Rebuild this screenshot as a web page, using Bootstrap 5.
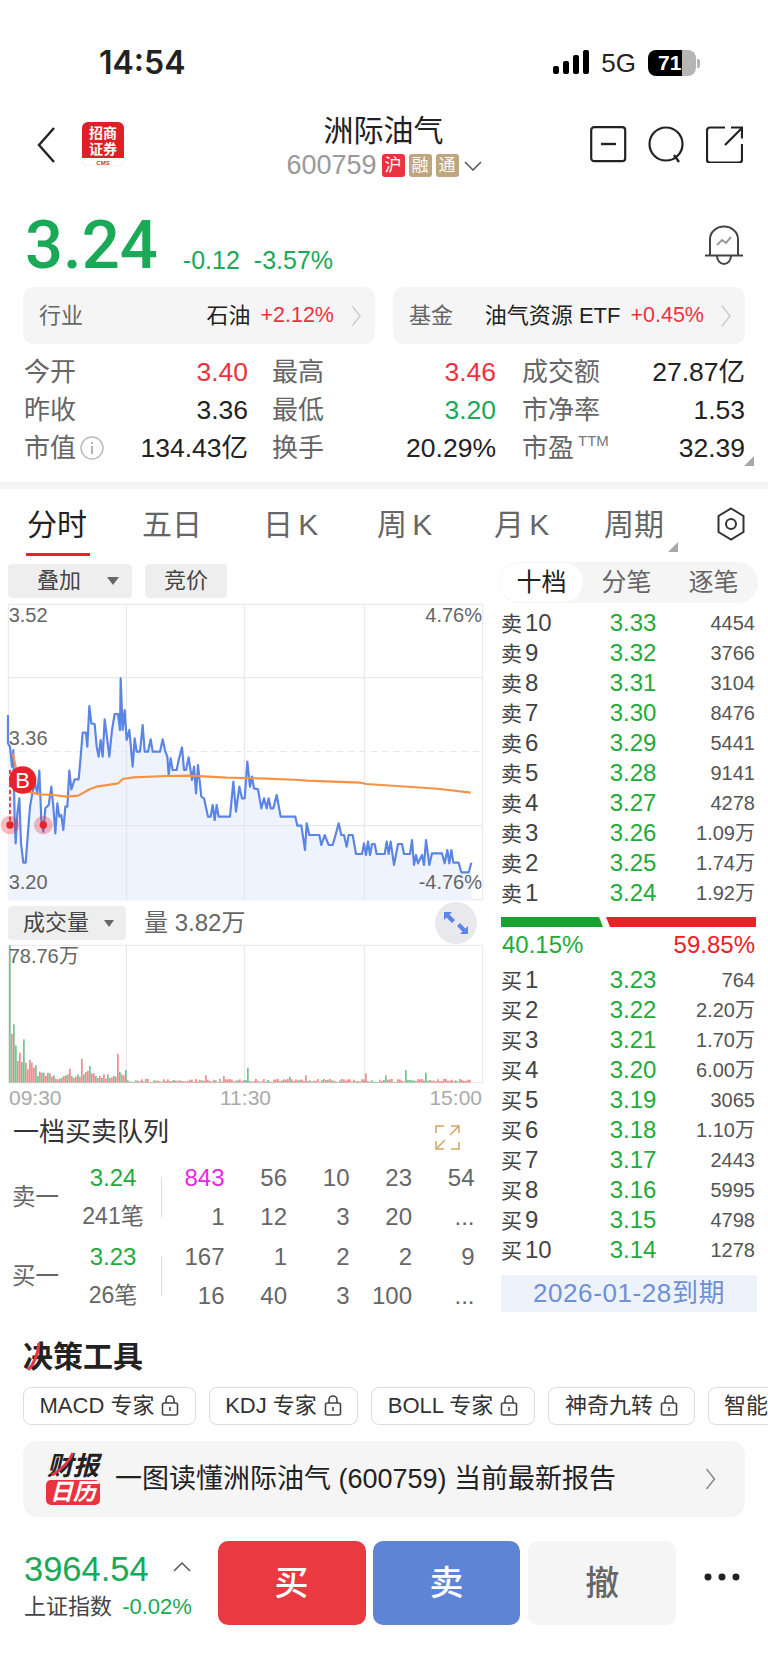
<!DOCTYPE html>
<html lang="zh-CN">
<head>
    <meta charset="UTF-8">
    <meta name="viewport" content="width=device-width, initial-scale=1.0">
    <title>洲际油气 600759</title>
    <link href="https://cdn.jsdelivr.net/npm/bootstrap@5.3.0/dist/css/bootstrap.min.css" rel="stylesheet">
    <style>
        body {
            width: 768px;
            height: 1670px;
            overflow: hidden;
            background: #fff;
            color: #222;
            font-family: "Liberation Sans", "Noto Sans CJK SC", sans-serif;
        }
        .clr-up { color: #ea3340; }
        .clr-down { color: #1aa957; }
        .clr-grey { color: #666; }

        .status-bar { height: 112px; padding: 46px 68px 0 99px; }
        .status-time { font-family: Inter, "Liberation Sans", sans-serif; font-weight: 600; font-size: 32px; line-height: 34px; }
        .status-net { font-size: 26px; line-height: 34px; margin: 0 12px 0 12px; }
        .battery-body { width: 48px; height: 26px; border-radius: 8px; background: linear-gradient(90deg, #000 71%, #b5b5b5 71%); color: #fff; font-weight: 700; font-size: 21px; line-height: 26px; padding-left: 10px; }
        .battery-cap { width: 3px; height: 9px; background: #b5b5b5; border-radius: 0 2px 2px 0; margin-left: 1px; margin-top: 13px; }

        .head-bar { height: 66px; padding: 0 25px 0 37px; position: relative; }
        .head-logo { width: 42px; height: 44px; margin-left: 27px; margin-top: 10px; }
        .head-center { position: absolute; left: 0; right: 0; top: 0; text-align: center; }
        .head-title { font-size: 30px; line-height: 36px; color: #222; margin-top: 1px; padding-right: 1px; }
        .head-code { font-size: 27px; line-height: 27px; color: #999; margin-top: 3px; }
        .head-tag { width: 23px; height: 23px; border-radius: 3px; background: #bfa67f; color: #fff; font-size: 17px; line-height: 23px; text-align: center; margin-left: 4px; }
        .head-tag.tag-red { background: #ea3340; margin-left: 5px; }
        .head-icons { gap: 21px; margin-top: 14px; }

        .price-row { height: 109px; padding: 34px 25px 0 25px; }
        .price-big { font-family: Roboto, "Liberation Sans", sans-serif; font-weight: 500; font-size: 67px; line-height: 66px; }
        .price-diff { font-size: 25px; line-height: 30px; margin: 33px 0 0 25px; }
        .price-diff span + span { margin-left: 14px; }

        .sector-row { padding: 0 23px; gap: 18px; }
        .sector-box { width: 352px; height: 57px; border-radius: 10px; background: #f5f5f5; padding: 0 14px 0 16px; font-size: 22px; }
        .sector-pct { font-size: 21.500px; margin-left: 10px; color: #ea3340; }
        .sector-label { color: #666; font-size: 22px; }
        .stat-grid { padding: 9px 23px 0 24px; height: 138px; font-size: 26.500px; }
        .stat-line { height: 38px; line-height: 38px; }
        .stat-cell { width: 224px; }
        .stat-cell + .stat-cell { margin-left: 24px; }
        .stat-cell:last-child { width: 223px; margin-left: 26px; }
        .stat-name { color: #666; font-size: 26px; }
        .ttm-mark { font-size: 15px; position: relative; top: -11px; margin-left: 4px; color: #777; }
        .corner-tri { position: absolute; width: 0; height: 0; border-left: 10px solid transparent; border-bottom: 10px solid #a9a9a9; }
        .gap-band { height: 7px; background: #f5f5f5; }

        .tab-strip { height: 69px; position: relative; font-size: 30px; color: #666; }
        .tab-item { position: absolute; top: 18px; line-height: 36px; word-spacing: -3px; }
        .tab-item.on { color: #222; }
        .tab-line { position: absolute; left: 26px; top: 64px; width: 64px; height: 3px; background: #e8212a; }

        .chart-main { padding-left: 8px; height: 772px; }
        .chart-left { width: 475px; }
        .chart-right { width: 259px; margin-left: 16px; }
        .tool-row { gap: 13px; margin-top: 6px; }
        .tool-btn { height: 34px; border-radius: 4px; background: #eee; font-size: 22px; line-height: 34px; color: #444; }
        .chart-svg { display: block; overflow: visible; }
        .vol-row { margin-top: 6px; height: 34px; }
        .vol-val { font-size: 24px; color: #666; margin-left: 18px; }
        .expand-round { width: 42px; height: 42px; border-radius: 50%; background: #e9e9ed; margin: 0 6px 0 auto; }
        .time-axis { height: 26px; font-size: 21px; line-height: 26px; color: #aaa; padding: 2px 1px 0; }

        .queue-head { height: 49px; padding: 8px 23px 0 5px; font-size: 26px; line-height: 30px; color: #333; }
        .queue-block { height: 79px; }
        .queue-side { width: 62px; padding-left: 4px; font-size: 23.500px; color: #666; }
        .queue-price { width: 86px; text-align: center; font-size: 23px; line-height: 39px; color: #666; }
        .queue-price b { display: block; font-weight: 400; font-size: 24px; color: #22aa3a; }
        .queue-rule { width: 1px; height: 40px; background: #ddd; margin: 19px 0 0 5px; }
        .queue-nums { flex: 1 1 auto; }
        .queue-line { height: 39px; }
        .queue-num { width: 62.500px; text-align: right; font-size: 24px; line-height: 39px; color: #666; }
        .queue-num.pink { color: #e629e0; }

        .seg-wrap { height: 41px; border-radius: 21px; background: #f5f5f5; padding: 1px; font-size: 25px; color: #666; margin-top: 4px; }
        .seg-item { flex: 1 1 0; text-align: center; line-height: 39px; border-radius: 20px; }
        .seg-item.on { background: #fff; color: #222; flex: 0 0 83px; }
        .book-list { padding: 0 3px 0 2px; }
        .book-line { height: 30px; line-height: 30px; }
        .book-name { width: 94px; font-size: 21px; color: #444; }
        .book-name span { font-size: 24px; margin-left: 3px; }
        .book-price { width: 76px; text-align: center; font-size: 24px; color: #22aa3a; }
        .book-size { flex: 1 1 auto; text-align: right; font-size: 20px; color: #555; }
        .ratio-bar { height: 10px; margin: 9px 2px 0 2px; gap: 3px; }
        .ratio-green { width: 102px; background: #18a22f; clip-path: polygon(0 0, 98px 0, 100% 100%, 0 100%); }
        .ratio-red { width: 150px; background: #ea2227; clip-path: polygon(0 0, 100% 0, 100% 100%, 4px 100%); }
        .ratio-text { height: 38px; padding: 3px 3px 0 3px; font-size: 24px; line-height: 30px; }
        .expire-box { height: 37px; margin: 10px 1px 0 2px; background: #edf2fb; color: #6f8fd6; font-size: 26px; letter-spacing: .6px; line-height: 37px; text-align: center; }

        .tools-title { padding: 0 23px; margin-top: 9px; height: 37px; font-size: 30px; line-height: 36px; font-weight: 700; color: #222; position: relative; }
        .title-slash { position: absolute; left: 27px; top: 3px; }
        .chip-row { padding-left: 23px; gap: 13px; margin-top: 11px; overflow: hidden; }
        .chip-item { flex: 0 0 auto; height: 38px; border: 1px solid #ddd; border-radius: 8px; font-size: 22px; line-height: 36px; color: #333; white-space: nowrap; text-align: center; }
        .chip-item svg { margin-left: 7px; vertical-align: -3px; }
        .chip-macd { width: 173px; }
        .chip-kdj { width: 149px; }
        .chip-boll { width: 164px; }
        .chip-nine { width: 147px; }
        .chip-more { width: 120px; text-align: left; padding-left: 15px; }
        .report-box { height: 76px; margin: 16px 23px 0; background: #f5f5f5; border-radius: 14px; padding: 0 29px 0 23px; }
        .report-logo { width: 54px; text-align: center; font-weight: 700; font-style: italic; line-height: 1; position: relative; }
        .report-top { font-size: 26px; color: #222; height: 27px; line-height: 27px; }
        .report-low { font-size: 23px; color: #fff; background: #ea3340; border-radius: 5px; height: 25px; line-height: 25px; }
        .report-slash { position: absolute; left: 5px; top: -1px; }
        .report-text { font-size: 27px; color: #222; margin-left: 15px; }

        .order-bar { margin-top: 24px; padding: 0 28px 0 24px; height: 84px; }
        .index-box { width: 194px; position: relative; }
        .index-num { font-size: 34.500px; line-height: 40px; margin-top: 8px; }
        .index-name { font-size: 22px; line-height: 30px; color: #444; margin-top: 3px; }
        .order-btn { width: 148px; height: 84px; border-radius: 10px; border: 0; font-size: 34px; font-weight: 500; padding: 0; }
        .btn-buy { background: #ea3940; color: #fff; }
        .btn-sell { background: #5e85d5; color: #fff; margin-left: 7px; }
        .btn-undo { background: #f5f5f5; color: #666; margin-left: 8px; }
        .more-dots { margin-left: 28px; margin-top: 31px; }
    </style>
</head>
<body>
    <svg width="0" height="0" class="position-absolute">
        <symbol id="lockIcon" viewBox="0 0 18 22"><path d="M5 9V6a4 4 0 0 1 8 0v3" fill="none" stroke="#444" stroke-width="1.600"/><rect x="1.500" y="9" width="15" height="12" rx="2" fill="none" stroke="#444" stroke-width="1.600"/><path d="M9 13v4" stroke="#444" stroke-width="1.600"/></symbol>
        <symbol id="thinArrow" viewBox="0 0 10 22"><path d="M1 1l8 10-8 10" fill="none" stroke="#ccc" stroke-width="1.500"/></symbol>
    </svg>

    <div class="status-bar d-flex justify-content-between">
        <div class="status-time">14:54</div>
        <div class="d-flex align-items-start">
            <svg width="36" height="24" viewBox="0 0 36 24" class="mt-1"><rect x="0" y="16" width="6" height="8" rx="2" fill="#000"/><rect x="10" y="11" width="6" height="13" rx="2" fill="#000"/><rect x="20" y="5" width="6" height="19" rx="2" fill="#000"/><rect x="30" y="0" width="6" height="24" rx="2" fill="#000"/></svg>
            <span class="status-net">5G</span>
            <div class="battery-body mt-1">71</div>
            <div class="battery-cap"></div>
        </div>
    </div>

    <div class="head-bar d-flex justify-content-between align-items-start">
        <div class="head-center">
            <div class="head-title">洲际油气</div>
            <div class="head-code d-flex justify-content-center align-items-center">
                <span>600759</span>
                <span class="head-tag tag-red">沪</span><span class="head-tag">融</span><span class="head-tag">通</span>
                <svg width="18" height="10" viewBox="0 0 18 10" style="margin-left:5px"><path d="M1 1l8 8 8-8" fill="none" stroke="#555" stroke-width="1.500"/></svg>
            </div>
        </div>
        <div class="d-flex position-relative">
            <svg width="18" height="36" viewBox="0 0 18 36" style="margin-top:15px"><path d="M17 1L2 18l15 17" fill="none" stroke="#222" stroke-width="2.400"/></svg>
            <svg class="head-logo" viewBox="0 0 42 44">
                <rect width="42" height="44" rx="6" fill="#fff" stroke="#eee"/>
                <path d="M0 6a6 6 0 0 1 6-6h30a6 6 0 0 1 6 6v30H0z" fill="#de1f26"/>
                <text x="21" y="16" text-anchor="middle" font-size="14" font-weight="700" fill="#fff" font-family="'Noto Sans CJK SC'">招商</text>
                <text x="21" y="32" text-anchor="middle" font-size="14" font-weight="700" fill="#fff" font-family="'Noto Sans CJK SC'">证券</text>
                <text x="21" y="42.500" text-anchor="middle" font-size="6" font-weight="700" fill="#c33">CMS</text>
            </svg>
        </div>
        <div class="head-icons d-flex position-relative">
            <svg width="37" height="37" viewBox="0 0 37 37"><rect x="1.200" y="1.200" width="34" height="34" rx="3" fill="none" stroke="#222" stroke-width="2.200"/><path d="M11 18h15" stroke="#222" stroke-width="2.400"/></svg>
            <svg width="37" height="37" viewBox="0 0 37 37"><circle cx="18" cy="18" r="16.500" fill="none" stroke="#222" stroke-width="2.200"/><path d="M26 29l5 7" stroke="#222" stroke-width="2.400"/></svg>
            <svg width="37" height="37" viewBox="0 0 37 37"><path d="M19 1.500H4a3 3 0 0 0-3 3v29a3 3 0 0 0 3 3h29a3 3 0 0 0 3-3V18" fill="none" stroke="#222" stroke-width="2.200"/><path d="M19 19L36 2M25 1.500h11v11" fill="none" stroke="#222" stroke-width="2.200"/></svg>
        </div>
    </div>

    <div class="price-row d-flex clr-down position-relative">
        <div class="price-big">3.24</div>
        <div class="price-diff"><span>-0.12</span><span>-3.57%</span></div>
        <svg class="ms-auto" width="38" height="42" viewBox="0 0 38 42" style="margin-top:13px"><path d="M5 30V14a14 12.500 0 0 1 28 0v16" fill="none" stroke="#444" stroke-width="2"/><path d="M0 30.500h38" stroke="#444" stroke-width="2"/><path d="M12 31a7 8 0 0 0 14 0" fill="none" stroke="#444" stroke-width="2"/><path d="M12 20l5-5 4 3 5-6" fill="none" stroke="#999" stroke-width="2"/></svg>
    </div>

    <div class="sector-row d-flex">
        <div class="sector-box d-flex align-items-center">
            <span class="sector-label">行业</span>
            <span class="ms-auto">石油</span>
            <span class="sector-pct">+2.12%</span>
            <svg width="10" height="22" style="margin-left:17px"><use href="#thinArrow"/></svg>
        </div>
        <div class="sector-box d-flex align-items-center">
            <span class="sector-label">基金</span>
            <span class="ms-auto">油气资源 ETF</span>
            <span class="sector-pct">+0.45%</span>
            <svg width="10" height="22" style="margin-left:17px"><use href="#thinArrow"/></svg>
        </div>
    </div>

    <div class="stat-grid position-relative">
        <div class="stat-line d-flex">
            <div class="stat-cell d-flex justify-content-between"><span class="stat-name">今开</span><span class="clr-up">3.40</span></div>
            <div class="stat-cell d-flex justify-content-between"><span class="stat-name">最高</span><span class="clr-up">3.46</span></div>
            <div class="stat-cell d-flex justify-content-between"><span class="stat-name">成交额</span><span>27.87亿</span></div>
        </div>
        <div class="stat-line d-flex">
            <div class="stat-cell d-flex justify-content-between"><span class="stat-name">昨收</span><span>3.36</span></div>
            <div class="stat-cell d-flex justify-content-between"><span class="stat-name">最低</span><span class="clr-down">3.20</span></div>
            <div class="stat-cell d-flex justify-content-between"><span class="stat-name">市净率</span><span>1.53</span></div>
        </div>
        <div class="stat-line d-flex">
            <div class="stat-cell d-flex justify-content-between align-items-center"><span class="stat-name d-flex align-items-center">市值<svg class="ms-1" width="24" height="24" viewBox="0 0 24 24"><circle cx="12" cy="12" r="11" fill="none" stroke="#bbb" stroke-width="1.500"/><path d="M12 10v8M12 6v2" stroke="#aaa" stroke-width="1.800"/></svg></span><span>134.43亿</span></div>
            <div class="stat-cell d-flex justify-content-between"><span class="stat-name">换手</span><span>20.29%</span></div>
            <div class="stat-cell d-flex justify-content-between"><span class="stat-name">市盈<span class="ttm-mark">TTM</span></span><span>32.39</span></div>
        </div>
        <div class="corner-tri" style="left:744px;top:112px"></div>
    </div>
    <div class="gap-band"></div>

    <div class="tab-strip">
        <span class="tab-item on" style="left:27px">分时</span>
        <span class="tab-item" style="left:142px">五日</span>
        <span class="tab-item" style="left:263px">日 K</span>
        <span class="tab-item" style="left:377px">周 K</span>
        <span class="tab-item" style="left:494px">月 K</span>
        <span class="tab-item" style="left:604px">周期</span>
        <div class="corner-tri" style="left:668px;top:53px"></div>
        <svg class="position-absolute" style="left:717px;top:18px" width="28" height="34" viewBox="0 0 28 34"><path d="M14 1.500l12.500 7.500v16L14 32.500 1.500 25V9z" fill="none" stroke="#333" stroke-width="2"/><circle cx="14" cy="17" r="5" fill="none" stroke="#333" stroke-width="2"/></svg>
        <div class="tab-line"></div>
    </div>

    <div class="chart-main d-flex">
        <div class="chart-left">
            <div class="tool-row d-flex">
                <div class="tool-btn d-flex align-items-center" style="width:124px;padding-left:29px">叠加<svg style="margin-left:26px" width="12" height="8" viewBox="0 0 12 8"><path d="M0 0h12L6 8z" fill="#666"/></svg></div>
                <div class="tool-btn text-center" style="width:82px">竞价</div>
            </div>
            <svg id="priceChart" class="chart-svg" style="margin-top:6px" width="475" height="296" viewBox="24 132 1425 888" font-family="Liberation Sans" font-size="60" fill="#666">
                <rect x="25" y="133" width="1423" height="886" fill="#fff" stroke="#e8e8e8" stroke-width="3"/>
                <path id="priceArea" fill="#eff3fe"/>
                <g stroke="#e4e4e8" stroke-width="3">
                    <path d="M379 132v888M733 132v888M1093 132v888M24 353h1425M24 797h1425"/>
                    <path d="M24 575h1425" stroke-dasharray="20 14"/>
                </g>
                <text x="26" y="186">3.52</text>
                <text x="26" y="554">3.36</text>
                <text x="26" y="988">3.20</text>
                <text x="1446" y="186" text-anchor="end">4.76%</text>
                <text x="1446" y="988" text-anchor="end">-4.76%</text>
                <polyline id="priceLine" fill="none" stroke="#5a85e4" stroke-width="6.500" stroke-linejoin="round"/>
                <polyline fill="none" stroke="#f59243" stroke-width="6.500" stroke-linejoin="round" points="38,580 48,625 60,660 80,695 120,703 160,705 200,710 235,707 270,687 290,680 355,670 368,657 400,652 500,648 570,647 680,653 780,655 900,660 920,662 1080,668 1100,672 1280,684 1320,687 1412,698"/>
                <path d="M30 630v165" stroke="#e8212a" stroke-width="5" stroke-dasharray="12 8"/>
                <circle cx="30" cy="795" r="28" fill="#e8212a" opacity=".3"/><circle cx="30" cy="795" r="11" fill="#e8212a"/>
                <circle cx="130" cy="795" r="28" fill="#e8212a" opacity=".3"/><circle cx="130" cy="795" r="11" fill="#e8212a"/>
                <circle cx="68" cy="660" r="41" fill="#e8212a"/>
                <text x="68" y="684" text-anchor="middle" fill="#fff" font-size="66">B</text>
            </svg>
            <div class="vol-row d-flex align-items-center">
                <div class="tool-btn d-flex align-items-center" style="width:118px;padding-left:15px">成交量<svg style="margin-left:15px" width="10" height="7" viewBox="0 0 10 7"><path d="M0 0h10L5 7z" fill="#666"/></svg></div>
                <span class="vol-val">量 3.82万</span>
                <div class="expand-round d-flex align-items-center justify-content-center"><svg width="26" height="24" viewBox="0 0 26 24"><path d="M1 1h8L6.500 3.500 12 9l-3 3-5.500-5.500L1 9zM25 23h-8l2.500-2.500L14 15l3-3 5.500 5.500L25 15z" fill="#5a85e4"/></svg></div>
            </div>
            <svg id="volChart" class="chart-svg" style="margin-top:5px" width="475" height="138" viewBox="24 137 1425 414" font-family="Liberation Sans" font-size="60" fill="#666">
                <rect x="25" y="138" width="1423" height="412" fill="#fff" stroke="#e8e8e8" stroke-width="3"/>
                <path d="M379 137v413M733 137v413M1093 137v413" stroke="#e4e4e8" stroke-width="3"/>
                <g id="volBars"></g>
                <text x="26" y="192">78.76万</text>
            </svg>
            <div class="time-axis d-flex justify-content-between"><span>09:30</span><span>11:30</span><span>15:00</span></div>

            <div class="queue-head d-flex justify-content-between">
                <span>一档买卖队列</span>
                <svg width="25" height="25" viewBox="0 0 25 25" style="margin-top:8px"><path d="M1 8V1h8M16 1h8v7M24 17v7h-8M9 24H1v-8M15 10l8-8M10 15l-8 8" fill="none" stroke="#d4a562" stroke-width="1.500"/></svg>
            </div>
            <div class="queue-block d-flex">
                <div class="queue-side d-flex align-items-center">卖一</div>
                <div class="queue-price"><b>3.24</b>241笔</div>
                <div class="queue-rule"></div>
                <div class="queue-nums">
                    <div class="queue-line d-flex"><span class="queue-num pink">843</span><span class="queue-num">56</span><span class="queue-num">10</span><span class="queue-num">23</span><span class="queue-num">54</span></div>
                    <div class="queue-line d-flex"><span class="queue-num">1</span><span class="queue-num">12</span><span class="queue-num">3</span><span class="queue-num">20</span><span class="queue-num">...</span></div>
                </div>
            </div>
            <div class="queue-block d-flex">
                <div class="queue-side d-flex align-items-center">买一</div>
                <div class="queue-price"><b>3.23</b>26笔</div>
                <div class="queue-rule"></div>
                <div class="queue-nums">
                    <div class="queue-line d-flex"><span class="queue-num">167</span><span class="queue-num">1</span><span class="queue-num">2</span><span class="queue-num">2</span><span class="queue-num">9</span></div>
                    <div class="queue-line d-flex"><span class="queue-num">16</span><span class="queue-num">40</span><span class="queue-num">3</span><span class="queue-num">100</span><span class="queue-num">...</span></div>
                </div>
            </div>
        </div>

        <div class="chart-right">
            <div class="seg-wrap d-flex">
                <div class="seg-item on">十档</div>
                <div class="seg-item">分笔</div>
                <div class="seg-item">逐笔</div>
            </div>
            <div id="askList" class="book-list" style="padding-top:5px"></div>
            <div class="ratio-bar d-flex"><div class="ratio-green"></div><div class="ratio-red"></div></div>
            <div class="ratio-text d-flex justify-content-between"><span style="color:#22aa3a">40.15%</span><span style="color:#ea2227">59.85%</span></div>
            <div id="bidList" class="book-list"></div>
            <div class="expire-box">2026-01-28到期</div>
        </div>
    </div>

    <div class="tools-title">决策工具
        <svg class="title-slash" width="14" height="30" viewBox="0 0 14 30"><path d="M12 1C11 12 7 22 1 28" fill="none" stroke="#ea3340" stroke-width="3"/></svg>
    </div>
    <div class="chip-row d-flex">
        <div class="chip-item chip-macd">MACD 专家<svg width="18" height="22"><use href="#lockIcon"/></svg></div>
        <div class="chip-item chip-kdj">KDJ 专家<svg width="18" height="22"><use href="#lockIcon"/></svg></div>
        <div class="chip-item chip-boll">BOLL 专家<svg width="18" height="22"><use href="#lockIcon"/></svg></div>
        <div class="chip-item chip-nine">神奇九转<svg width="18" height="22"><use href="#lockIcon"/></svg></div>
        <div class="chip-item chip-more">智能</div>
    </div>
    <div class="report-box d-flex align-items-center">
        <div class="report-logo">
            <div class="report-top">财报</div>
            <div class="report-low">日历</div>
            <svg class="report-slash" width="24" height="24" viewBox="0 0 24 24"><path d="M1 23C10 18 18 10 22 1" fill="none" stroke="#ea3340" stroke-width="3"/></svg>
        </div>
        <span class="report-text">一图读懂洲际油气 (600759) 当前最新报告</span>
        <svg class="ms-auto" width="11" height="22" viewBox="0 0 10 22"><path d="M1 1l8 10-8 10" fill="none" stroke="#888" stroke-width="1.500"/></svg>
    </div>

    <div class="order-bar d-flex">
        <div class="index-box">
            <div class="index-num clr-down">3964.54</div>
            <div class="index-name">上证指数 <span class="clr-down ms-1">-0.02%</span></div>
            <svg class="position-absolute" style="left:149px;top:21px" width="18" height="10" viewBox="0 0 18 10"><path d="M1 9l8-8 8 8" fill="none" stroke="#555" stroke-width="1.500"/></svg>
        </div>
        <button class="order-btn btn-buy">买</button>
        <button class="order-btn btn-sell">卖</button>
        <button class="order-btn btn-undo">撤</button>
        <svg class="more-dots" width="36" height="10" viewBox="0 0 36 10"><circle cx="4" cy="5" r="3.500" fill="#222"/><circle cx="18" cy="5" r="3.500" fill="#222"/><circle cx="32" cy="5" r="3.500" fill="#222"/></svg>
    </div>

    <script>
        // blue minute line, in the 3x coordinates the svg viewBox uses
        var pts = "24,465 24,550 30,560 36,620 40,570 44,780 47,850 52,760 58,715 63,850 70,908 77,908 83,830 90,740 97,700 105,670 112,700 118,632 124,780 130,815 136,745 146,735 154,680 160,740 166,820 172,730 178,770 184,765 190,810 196,740 202,740 208,632 214,688 224,658 236,658 242,590 248,518 258,518 262,560 268,438 274,490 284,492 290,560 296,590 302,540 308,590 314,478 322,540 328,590 336,510 344,462 354,462 360,510 362,355 368,510 374,450 380,540 388,510 398,620 404,535 410,575 420,575 428,495 434,575 444,575 452,538 458,575 480,575 488,538 496,575 502,590 506,645 512,595 518,630 530,630 536,600 546,562 552,630 558,630 566,592 576,660 582,620 588,700 594,615 604,710 612,715 624,770 632,770 638,735 644,780 650,735 656,770 690,770 700,665 708,755 718,680 726,715 734,715 742,605 750,680 756,650 762,685 774,688 784,745 792,715 800,745 806,715 812,745 820,745 830,705 842,770 886,770 892,797 904,797 915,870 920,790 928,825 958,825 964,855 974,825 986,855 998,855 1008,820 1016,790 1024,825 1032,825 1040,860 1046,825 1058,825 1068,882 1086,882 1092,850 1098,885 1104,845 1110,885 1116,852 1124,852 1130,882 1154,882 1160,845 1166,882 1172,845 1182,915 1194,852 1206,852 1212,882 1230,882 1236,840 1242,915 1248,885 1254,910 1266,885 1272,915 1278,840 1288,915 1296,880 1326,880 1334,910 1342,870 1348,910 1354,870 1360,908 1376,908 1384,937 1406,937 1414,908";
        document.getElementById('priceLine').setAttribute('points', pts);
        document.getElementById('priceArea').setAttribute('d', 'M' + pts.replace(/ /g, 'L') + 'L1414,1019L24,1019Z');

        // volume bars: first stretch read off the picture, the tail is just low noise plus the visible spikes
        var head = [412,147,175,112,65,90,62,130,60,40,68,60,45,52,20,33,30,30,20,30,28,18,22,12,10,12,15,20,22,25,42,20,14,18,25,18,72,25,32,35,50,28,28,20,14,20,14,25,12,25,14,16,20,18,87,32,25,22,38];
        var spikes = {742: 45, 1003: 26, 1217: 38, 1277: 30, 1097: 28, 1157: 22, 672: 20, 617: 22, 916: 22, 866: 18, 943: 18};
        var seed = 7, html = '';
        for (var x = 28; x <= 1412; x += 6) {
            seed = (seed * 137 + 41) % 1009;
            var i = (x - 28) / 6;
            var h = i < head.length ? head[i] : 2 + seed % 10;
            for (var k in spikes) { if (Math.abs(k - x) < 3) h = spikes[k]; }
            var up = i < head.length ? [1,4,5,8,9,10,11,12,15,17].indexOf(i) >= 0 || (i > 17 && i % 3 != 1) : seed % 5 > 1;
            html += '<rect x="' + x + '" y="' + (550 - h) + '" width="3.500" height="' + h + '" fill="' + (up ? '#e8595f' : '#35a860') + '"/>';
        }
        document.getElementById('volBars').innerHTML = html;

        function bookRows(label, rows) {
            return rows.map(function (r) {
                return '<div class="book-line d-flex"><div class="book-name">' + label + '<span>' + r[0] + '</span></div><div class="book-price">' + r[1] + '</div><div class="book-size">' + r[2] + '</div></div>';
            }).join('');
        }
        document.getElementById('askList').innerHTML = bookRows('卖', [[10,'3.33','4454'],[9,'3.32','3766'],[8,'3.31','3104'],[7,'3.30','8476'],[6,'3.29','5441'],[5,'3.28','9141'],[4,'3.27','4278'],[3,'3.26','1.09万'],[2,'3.25','1.74万'],[1,'3.24','1.92万']]);
        document.getElementById('bidList').innerHTML = bookRows('买', [[1,'3.23','764'],[2,'3.22','2.20万'],[3,'3.21','1.70万'],[4,'3.20','6.00万'],[5,'3.19','3065'],[6,'3.18','1.10万'],[7,'3.17','2443'],[8,'3.16','5995'],[9,'3.15','4798'],[10,'3.14','1278']]);
    </script>
</body>
</html>
